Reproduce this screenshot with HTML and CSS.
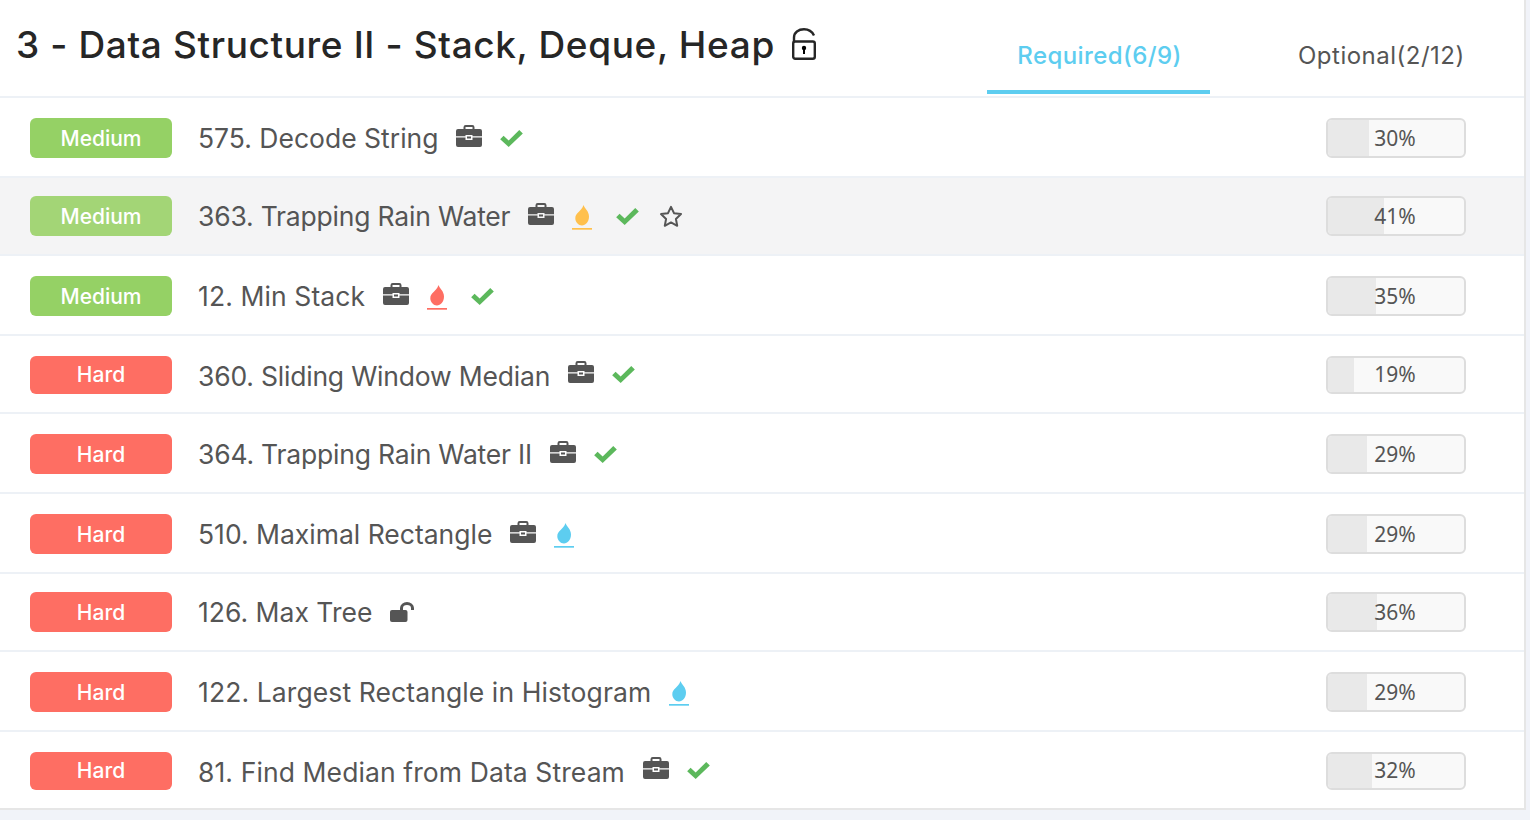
FILE: index.html
```html
<!DOCTYPE html>
<html>
	<head>
		<title>Data Structure II</title>
		<meta charset="utf-8"/>
		<link rel="stylesheet" href="styles.css">
	</head>
	<body>
		<svg class="defs" width="0" height="0">
			<symbol id="briefcase" viewBox="0 0 26 22">
				<path fill-rule="evenodd" d="M7.500 4V2.200A2.200 2.200 0 0 1 9.700 0h6.600a2.200 2.200 0 0 1 2.200 2.200V4H24a2 2 0 0 1 2 2v5.200H16.500v-1.200h-7v1.200H0V6a2 2 0 0 1 2-2zM9.500 2v2h7V2z"/>
				<path d="M0 12.400h9.500v2.600h7v-2.600H26V20a2 2 0 0 1-2 2H2a2 2 0 0 1-2-2z"/>
				<rect x="11" y="11.500" width="4" height="2"/>
			</symbol>
			<symbol id="check" viewBox="0 0 24 18">
				<path d="M0 9.800 3.600 6 9 11 20.200 0 24 3.800 9 18z"/>
			</symbol>
			<symbol id="flame" viewBox="0 0 20 25">
				<path d="M11.500 0C12.500 3.500 17 6 17 11.500 17 16.800 13.500 20.500 10 20.500 6.500 20.500 3.300 17.300 3.300 13.300 3.300 7.500 9.500 6.500 11.500 0z"/>
				<rect y="23" width="20" height="1.700"/>
			</symbol>
			<symbol id="star" viewBox="0 0 24 23">
				<path fill="none" stroke="currentColor" stroke-width="2" stroke-linejoin="round" d="M12 1.800l3 6.400 7 .9-5.100 4.800 1.300 6.900L12 17.400l-6.200 3.400 1.300-6.900L2 9.100l7-.9z"/>
			</symbol>
			<symbol id="unlock" viewBox="0 0 24 20">
				<path d="M2 8h13.500a2 2 0 0 1 2 2v8a2 2 0 0 1-2 2H2a2 2 0 0 1-2-2v-8a2 2 0 0 1 2-2z"/>
				<path fill="none" stroke="currentColor" stroke-width="3" d="M11.500 9V6a5.500 4.500 0 0 1 11 0v2"/>
			</symbol>
		</svg>

		<div class="card">
			<div class="head">
				<h1 class="title">3 - Data Structure II - Stack, Deque, Heap
					<svg class="lock" viewBox="0 0 24 32">
						<path fill="none" stroke="currentColor" stroke-width="2.400" d="M2 14V9.500C2 4.500 6.500 1.300 12 1.300c4.500 0 8 2 10 6.200"/>
						<rect x="1.200" y="13.500" width="21.600" height="17.300" rx="2" fill="none" stroke="currentColor" stroke-width="2.400"/>
						<circle cx="12" cy="20" r="2.200"/>
						<rect x="11" y="20" width="2" height="6"/>
					</svg>
				</h1>
				<div class="tabs">
					<div class="tab on">Required(6/9)</div>
					<div class="tab">Optional(2/12)</div>
				</div>
			</div>

			<div class="row">
				<span class="pill medium">Medium</span>
				<span class="name">575. Decode String</span>
				<svg class="ic bag"><use href="#briefcase"/></svg>
				<svg class="ic ok"><use href="#check"/></svg>
				<div class="rate"><div class="fill" style="width:30%"></div><span>30%</span></div>
			</div>
			<div class="row short hover">
				<span class="pill medium">Medium</span>
				<span class="name tight">363. Trapping Rain Water</span>
				<svg class="ic bag"><use href="#briefcase"/></svg>
				<svg class="ic fire yellow"><use href="#flame"/></svg>
				<svg class="ic ok"><use href="#check"/></svg>
				<svg class="ic star"><use href="#star"/></svg>
				<div class="rate"><div class="fill" style="width:41%"></div><span>41%</span></div>
			</div>
			<div class="row">
				<span class="pill medium">Medium</span>
				<span class="name wide">12. Min Stack</span>
				<svg class="ic bag"><use href="#briefcase"/></svg>
				<svg class="ic fire red"><use href="#flame"/></svg>
				<svg class="ic ok"><use href="#check"/></svg>
				<div class="rate"><div class="fill" style="width:35%"></div><span>35%</span></div>
			</div>
			<div class="row short thin">
				<span class="pill hard">Hard</span>
				<span class="name tight">360. Sliding Window Median</span>
				<svg class="ic bag"><use href="#briefcase"/></svg>
				<svg class="ic ok"><use href="#check"/></svg>
				<div class="rate"><div class="fill" style="width:19%"></div><span>19%</span></div>
			</div>
			<div class="row">
				<span class="pill hard">Hard</span>
				<span class="name tight">364. Trapping Rain Water II</span>
				<svg class="ic bag"><use href="#briefcase"/></svg>
				<svg class="ic ok"><use href="#check"/></svg>
				<div class="rate"><div class="fill" style="width:29%"></div><span>29%</span></div>
			</div>
			<div class="row">
				<span class="pill hard">Hard</span>
				<span class="name">510. Maximal Rectangle</span>
				<svg class="ic bag"><use href="#briefcase"/></svg>
				<svg class="ic fire blue"><use href="#flame"/></svg>
				<div class="rate"><div class="fill" style="width:29%"></div><span>29%</span></div>
			</div>
			<div class="row short">
				<span class="pill hard">Hard</span>
				<span class="name">126. Max Tree</span>
				<svg class="ic open"><use href="#unlock"/></svg>
				<div class="rate"><div class="fill" style="width:36%"></div><span>36%</span></div>
			</div>
			<div class="row">
				<span class="pill hard">Hard</span>
				<span class="name wide">122. Largest Rectangle in Histogram</span>
				<svg class="ic fire blue"><use href="#flame"/></svg>
				<div class="rate"><div class="fill" style="width:29%"></div><span>29%</span></div>
			</div>
			<div class="row short thin">
				<span class="pill hard">Hard</span>
				<span class="name wide">81. Find Median from Data Stream</span>
				<svg class="ic bag"><use href="#briefcase"/></svg>
				<svg class="ic ok"><use href="#check"/></svg>
				<div class="rate"><div class="fill" style="width:32%"></div><span>32%</span></div>
			</div>
		</div>
	</body>
</html>
```

FILE: styles.css
```css
body {
	margin: 0;
	background-color: #f1f3f9;
	font-family: Inter, "Liberation Sans", sans-serif;
	overflow: hidden;
}

.defs {
	display: block;
	height: 0;
}

.card {
	width: 1524px;
	background-color: white;
	border-right: 2px solid #e6e6e6;
	border-bottom: 2px solid #e6e6e6;
}

.head {
	height: 96px;
	display: flex;
	justify-content: space-between;
	border-bottom: 2px solid #edf1f6;
}

.title {
	margin: 0;
	padding: 21px 0 0 16px;
	font-size: 37px;
	font-weight: 500;
	line-height: 48px;
	letter-spacing: .620px;
	color: #262626;
}

.lock {
	width: 24px;
	height: 32px;
	margin-left: 7px;
	vertical-align: -2px;
}

.tabs {
	display: flex;
	margin-right: 60px;
}

.tab {
	padding-top: 39px;
	height: 51px;
	width: 166px;
	margin-left: 88px;
	text-align: center;
	font-size: 24px;
	line-height: 34px;
	letter-spacing: .5px;
	color: #555;
}

.tab.on {
	width: 221px;
	padding-left: 2px;
	margin-left: 0;
	color: #5dcdf0;
	font-weight: 500;
	letter-spacing: .4px;
	border-bottom: 4px solid #5dcdf0;
}

.row {
	height: 76px;
	padding: 2px 58px 0 30px;
	display: flex;
	align-items: center;
	border-bottom: 2px solid #edf1f6;
}

.short {
	padding-top: 0;
}

.row:last-child {
	border-bottom: none;
}

.hover {
	background-color: #f4f4f5;
}

.pill {
	width: 142px;
	height: 40px;
	line-height: 42px;
	border-radius: 6px;
	text-align: center;
	color: white;
	font-size: 21px;
	font-weight: 500;
}

.medium {
	background-color: #95d165;
}

.hard {
	background-color: #fe6e63;
}

.hover .medium {
	background-color: #a3d576;
}

.name {
	margin-left: 26px;
	font-size: 26.500px;
	color: #555;
}

.thin .name {
	margin-top: 4px;
}

.tight {
	letter-spacing: -.2px;
}

.wide {
	letter-spacing: .1px;
}

.ic {
	margin-left: 18px;
	flex: none;
}

.bag {
	width: 26px;
	height: 22px;
	fill: #555;
	margin-top: -4px;
}

.ok {
	width: 23px;
	height: 17px;
	fill: #5cb85c;
	margin-top: 1px;
}

.fire {
	width: 20px;
	height: 25px;
	margin-top: 2px;
	margin-right: 6px;
}

.star {
	width: 24px;
	height: 23px;
	margin-left: 20px;
	color: #555;
	fill: none;
}

.open {
	width: 24px;
	height: 20px;
	fill: #555;
	color: #555;
}

.yellow {
	fill: #ffc04d;
}

.red {
	fill: #fe6e63;
}

.blue {
	fill: #5dcdf0;
}

.rate {
	margin-left: auto;
	width: 140px;
	height: 40px;
	box-sizing: border-box;
	border: 2px solid #ddd;
	border-radius: 6px;
	background-color: #f9f9f9;
	position: relative;
	overflow: hidden;
	text-align: center;
	font-family: "Noto Sans", sans-serif;
	font-size: 21px;
	line-height: 37px;
	color: #555;
}

.thin .pill {
	height: 38px;
	line-height: 38px;
	margin-top: 2px;
}

.thin .rate {
	height: 38px;
	line-height: 33px;
	margin-top: 2px;
}

.fill {
	position: absolute;
	left: 0;
	top: 0;
	bottom: 0;
	background-color: #e9e9e9;
}

.rate span {
	position: relative;
	margin-right: 2px;
}
```
